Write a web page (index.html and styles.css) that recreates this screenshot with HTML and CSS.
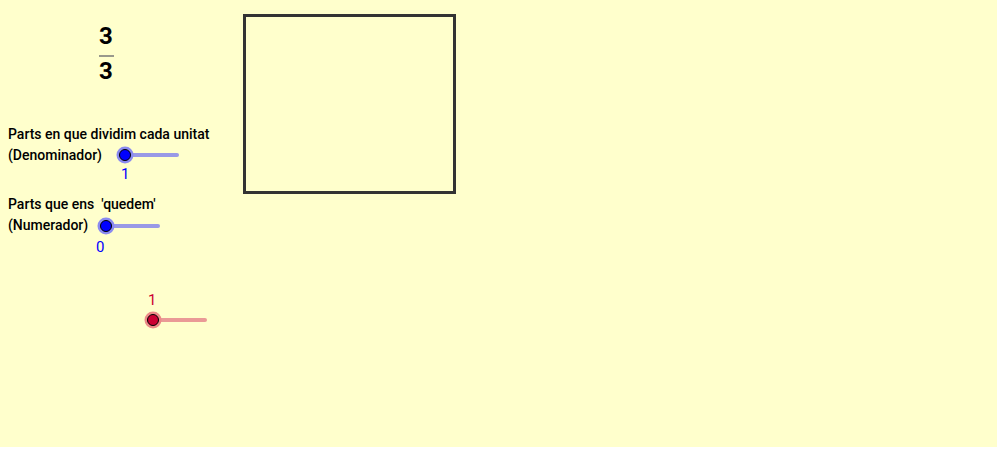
FILE: index.html
```html
<!DOCTYPE html>
<html>
<head>
<meta charset="utf-8">
<link rel="stylesheet" href="styles.css">
</head>
<body>
<div class="applet">
  <svg class="drawing" width="997" height="447" viewBox="0 0 997 447">
    <rect x="244.5" y="15.5" width="210" height="177" fill="none" stroke="#333333" stroke-width="3"/>
    <g>
      <line x1="125" y1="155" x2="177" y2="155" stroke="#9999e6" stroke-width="4" stroke-linecap="round"/>
      <circle cx="125" cy="155" r="8.5" fill="#8a8af0"/>
      <circle cx="125" cy="155" r="5.5" fill="#0000ff" stroke="#000" stroke-width="1"/>
    </g>
    <g>
      <line x1="106" y1="226" x2="158" y2="226" stroke="#9999e6" stroke-width="4" stroke-linecap="round"/>
      <circle cx="106" cy="226" r="8.5" fill="#8a8af0"/>
      <circle cx="106" cy="226" r="5.5" fill="#0000ff" stroke="#000" stroke-width="1"/>
    </g>
    <g>
      <line x1="153" y1="320" x2="205" y2="320" stroke="#ea9a96" stroke-width="4" stroke-linecap="round"/>
      <circle cx="153" cy="320" r="8.5" fill="#ec8a88"/>
      <circle cx="153" cy="320" r="5.5" fill="#cc0033" stroke="#000" stroke-width="1"/>
    </g>
    <line x1="99" y1="56" x2="114" y2="56" stroke="#777" stroke-width="1.5"/>
  </svg>

  <div class="frac num">3</div>
  <div class="frac den">3</div>

  <div class="label l1">Parts en que dividim cada unitat<br>(Denominador)</div>
  <div class="label l2">Parts que ens&nbsp; 'quedem'<br>(Numerador)</div>

  <div class="val blue v1">1</div>
  <div class="val blue v2">0</div>
  <div class="val red v3">1</div>
</div>
</body>
</html>
```
FILE: styles.css
```css
html, body {
  margin: 0;
  padding: 0;
  background: #ffffff;
}
.applet {
  position: relative;
  width: 997px;
  height: 447px;
  background: #ffffcc;
  overflow: hidden;
  font-family: Roboto, "Liberation Sans", sans-serif;
}
.drawing {
  position: absolute;
  left: 0;
  top: 0;
}
.frac {
  position: absolute;
  left: 99px;
  font-size: 24px;
  font-weight: 700;
  line-height: 24px;
  color: #000;
}
.num { top: 24px; }
.den { top: 59px; }
.label {
  position: absolute;
  left: 8px;
  font-size: 14px;
  font-weight: 500;
  line-height: 21px;
  color: #000;
}
.l1 { top: 124px; }
.l2 { top: 194px; }
.val {
  position: absolute;
  font-size: 15px;
  line-height: 16px;
}
.blue { color: #0000ff; }
.red { color: #cc0033; }
.v1 { left: 121px; top: 166px; }
.v2 { left: 96px; top: 239px; }
.v3 { left: 148px; top: 292px; }
```
